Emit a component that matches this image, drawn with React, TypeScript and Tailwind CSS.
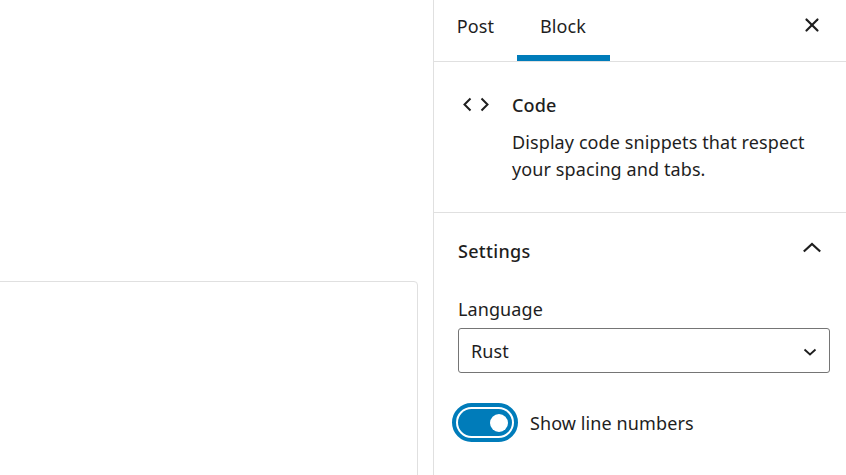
import { X } from "lucide-react";

export default function App() {
  return (
    <div className="flex h-[475px] w-[846px] overflow-hidden bg-white font-['Noto_Sans',sans-serif] tracking-[0.1px] text-[#1e1e1e]">
      <main className="flex-1 overflow-hidden pt-[281px] pr-[15px]">
        <div className="-ml-4 h-[300px] rounded-[4px] border border-[#e0e0e0]" />
      </main>

      <aside className="w-[413px] shrink-0 border-l border-[#e0e0e0]">
        <nav className="flex h-[62px] items-stretch border-b border-[#e0e0e0]">
          <div className="flex w-[83px] items-start justify-center pt-[13px] text-[18px] leading-[26px]">Post</div>
          <div className="relative flex w-[93px] items-start justify-center pt-[13px] pr-px text-[18px] leading-[26px]">
            Block
            <span className="absolute inset-x-0 bottom-0 h-[6px] bg-[#007cba]" />
          </div>
          <div className="ml-auto pt-[14px] pr-[23px]">
            <X size={22} strokeWidth={2.4} />
          </div>
        </nav>

        <section className="flex h-[151px] border-b border-[#e0e0e0] pt-[30px]">
          <div className="w-[78px] pl-[29px] pt-[5px]">
            <svg width="26" height="16" viewBox="0 0 26 16" fill="none" stroke="#1e1e1e" strokeWidth="2">
              <path d="M7.5 1.5 L1.5 7.5 L7.5 13.5" />
              <path d="M18.5 1.5 L24.5 7.5 L18.5 13.5" />
            </svg>
          </div>
          <div>
            <h2 className="text-[18px] font-medium leading-[26px]">Code</h2>
            <p className="mt-[11px] w-[310px] text-[18px] leading-[27px]">
              Display code snippets that respect your spacing and tabs.
            </p>
          </div>
        </section>

        <section className="px-[24px] pt-[25px]">
          <div className="flex items-start justify-between">
            <h2 className="text-[18px] font-medium leading-[26px] tracking-[0.3px]">Settings</h2>
            <svg className="mt-[3px]" width="20" height="14" viewBox="0 0 20 14" fill="none" stroke="#1e1e1e" strokeWidth="2.2">
              <path d="M1.8 10.5 L10 3 L18.2 10.5" />
            </svg>
          </div>
          <label className="mt-[32px] block text-[18px] leading-[26px]">Language</label>
          <div className="mt-[6px] flex h-[45px] w-[372px] items-center justify-between rounded-[3px] border border-[#757575] pl-3 pr-[12px] pt-[2px] text-[18px]">
            Rust
            <svg width="14" height="8" viewBox="0 0 14 8" fill="none" stroke="#1e1e1e" strokeWidth="1.8">
              <path d="M1.5 1.5 L7 6.5 L12.5 1.5" />
            </svg>
          </div>
          <div className="mt-[30px] flex items-center gap-3 -ml-[6px]">
            <div className="flex h-[39px] w-[66px] items-center rounded-full border-[4px] border-[#007cba] bg-white p-[2px]">
              <div className="flex h-full w-full items-center justify-end rounded-full bg-[#007cba] pr-[4px]">
                <span className="h-[18px] w-[18px] rounded-full bg-white" />
              </div>
            </div>
            <span className="text-[18px] leading-[26px]">Show line numbers</span>
          </div>
        </section>
      </aside>
    </div>
  );
}
